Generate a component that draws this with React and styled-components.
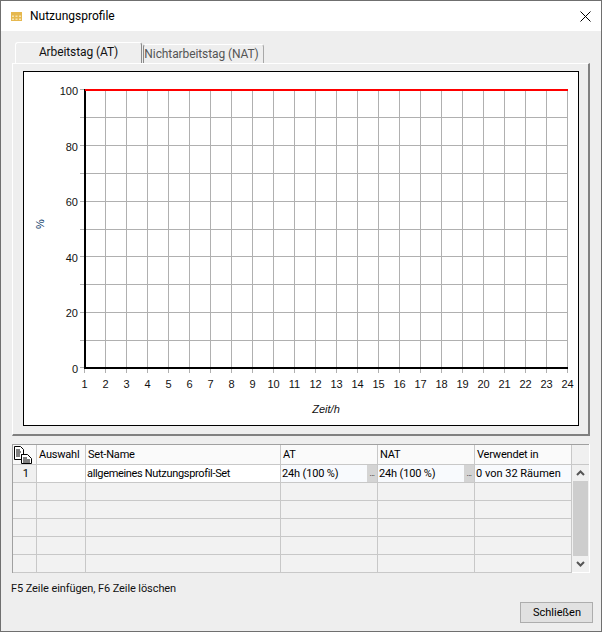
import React from "react";
import styled, { createGlobalStyle } from "styled-components";

const Global = createGlobalStyle`
  html, body { margin: 0; padding: 0; background: #eeeeee; }
  * { box-sizing: border-box; }
`;

const Win = styled.div`
  width: 602px; height: 632px; display: flex; flex-direction: column;
  background: #eeeeee; border: 1px solid #6f6f6f;
  font-family: Roboto, "Liberation Sans", sans-serif; font-size: 11px; color: #000; overflow: hidden;
`;
const TitleBar = styled.div`
  height: 30px; flex: none; background: #fff; display: flex; align-items: center; padding: 0 10px 0 10px; gap: 8px;
`;
const Title = styled.div`
  font-family: Roboto, sans-serif; font-size: 12px; color: #000; flex: 1; line-height: 30px;
`;
const Close = styled.svg` width: 11px; height: 11px; display: block; `;
const TabsRow = styled.div`
  height: 32px; flex: none; padding: 11px 0 0 14px; display: flex; align-items: flex-end; gap: 1px;
`;
const Tab = styled.div`
  height: ${p => (p.$active ? 21 : 19)}px; width: ${p => p.$w}px;
  background: #eeeeee;
  border: 1px solid ${p => (p.$active ? "#fff" : "#a8a8a8")};
  border-bottom: none;
  ${p => p.$active ? "border-right-color:#8a8a8a;" : "border-top-color:#fff; border-left-color:#8a8a8a; padding-right: 4px;"}
  border-radius: 3px 3px 0 0;
  font-family: Roboto, sans-serif; font-size: 12px; letter-spacing: -0.1px; text-align: center;
  color: ${p => (p.$active ? "#111" : "#555")};
  line-height: ${p => (p.$active ? 18 : 19)}px;
  white-space: nowrap;
`;
const Panel = styled.div`
  margin-left: 11px; width: 578px; height: 373px; flex: none;
  border: 1px solid #fff; border-right: 2px solid #808080; border-bottom: 2px solid #808080;
  padding: 7px 10px 0 10px;
`;
const ChartBox = styled.div`
  width: 556px; height: 355px; background: #fff; border: 1px solid #000;
`;
const ChartSvg = styled.svg` display: block; width: 554px; height: 353px; `;
const GridWrap = styled.div`
  margin: 8px 0 0 11px; width: 578px; height: 129px; flex: none; display: flex; background: #f2f2f2;
`;
const Table = styled.div`
  width: 560px; display: grid; grid-template-columns: 24px 49px 195px 97px 97px 97px;
  grid-template-rows: 20px repeat(6, 18px); flex: none;
  border-top: 1px solid #a0a0a0; border-left: 1px solid #a0a0a0;
`;
const Cell = styled.div`
  border-right: 1px solid #c8c8c8; border-bottom: 1px solid #c8c8c8;
  background: ${p => p.$bg || "#f2f2f2"};
  padding-left: 1px;
  font-size: 11px; white-space: nowrap; overflow: hidden;
  letter-spacing: ${p => p.$track || 0}px;
  display: flex; align-items: center; justify-content: space-between;
`;
const HeadCell = styled(Cell)`
  background: #fafafa; padding-left: 2px; letter-spacing: -0.2px;
`;
const CornerCell = styled(Cell)`
  background: #fafafa; padding: 0; align-items: flex-start;
`;
const RowNo = styled(Cell)`
  justify-content: flex-end; padding-right: 7px; background: #f0f0f0;
`;
const Dots = styled.span`
  width: 10px; height: 17px; background: #d4d4d4; color: #222; font-family: "Liberation Sans", sans-serif;
  font-size: 8px; letter-spacing: -0.6px; line-height: 17px; text-align: center; flex: none;
`;
const Scroll = styled.div`
  width: 18px; flex: none; display: flex; flex-direction: column; background: #f0f0f0;
  border-right: 1px solid #fff; border-bottom: 1px solid #fff;
`;
const ScrollCorner = styled.div`
  height: 21px; border-top: 1px solid #a0a0a0; border-bottom: 1px solid #c8c8c8; flex: none;
`;
const ScrollBtn = styled.div`
  height: ${p => p.$h}px; flex: none; display: flex; align-items: center; justify-content: center;
`;
const Thumb = styled.div`
  flex: 1; background: #cdcdcd; margin: 0 1px;
`;
const Hint = styled.div`
  margin: 9px 0 0 10px; height: 14px; font-size: 11px; letter-spacing: -0.09px; line-height: 14px; color: #111;
`;
const Footer = styled.div`
  display: flex; justify-content: flex-end; padding-right: 8px; margin-top: 6px;
`;
const Btn = styled.button`
  width: 73px; height: 21px; background: #e1e1e1; border: 1px solid #adadad; padding: 0 0 0 1px;
  font-family: Roboto, sans-serif; font-size: 11px; color: #000; line-height: 17px;
`;

const PX = i => 60 + i * 21;
const PY = v => 18 + (100 - v) * 2.78;
const FONT = "Liberation Sans";

function Chart() {
  const hours = Array.from({ length: 24 }, (_, i) => i);
  const lines = [90, 80, 70, 60, 50, 40, 30, 20, 10];
  const labels = [100, 80, 60, 40, 20, 0];
  return (
    <ChartSvg viewBox="0 0 554 353">
      {hours.map(i => (
        <line key={i} x1={PX(i) + 0.5} x2={PX(i) + 0.5} y1={18} y2={301} stroke="#b0b0b0" />
      ))}
      {lines.map(v => (
        <line key={v} x1={56} x2={PX(23) + 1} y1={Math.floor(PY(v)) + 0.5} y2={Math.floor(PY(v)) + 0.5} stroke="#b0b0b0" />
      ))}
      <rect x={56} y={17} width={5} height={1} fill="#b0b0b0" />
      <rect x={56} y={295} width={5} height={1} fill="#b0b0b0" />
      <rect x={60} y={17} width={2} height={280} fill="#000" />
      <rect x={60} y={295} width={484} height={2} fill="#000" />
      <rect x={61} y={17} width={483} height={2} fill="#f00" />
      {labels.map(v => (
        <text key={v} x={54} y={PY(v) + 5} textAnchor="end" fontFamily={FONT} fontSize="11" fill="#111">{v}</text>
      ))}
      {hours.map(i => (
        <text key={i} x={PX(i) + 0.5} y={316} textAnchor="middle" fontFamily={FONT} fontSize="11" fill="#111">{i + 1}</text>
      ))}
      <text x={302} y={341} textAnchor="middle" fontFamily={FONT} fontStyle="italic" fontSize="11" fill="#111">Zeit/h</text>
      <text transform="translate(20,152) rotate(-90)" textAnchor="middle" fontFamily={FONT} fontSize="11" fill="#00305f">%</text>
    </ChartSvg>
  );
}

const rows = [0, 1, 2, 3, 4];

export default function App() {
  return (
    <Win>
      <Global />
      <TitleBar>
        <svg width="11" height="9" viewBox="0 0 11 9">
          <rect width="11" height="9" fill="#e6b84f" />
          <path d="M1 3.5h2v1.5H1zM4.5 3.5h2v1.5h-2zM8 3.5h2v1.5H8zM1 6.5h2V8H1zM4.5 6.5h2V8h-2zM8 6.5h2V8H8z" fill="#f6e3b0" />
        </svg>
        <Title>Nutzungsprofile</Title>
        <Close viewBox="0 0 11 11"><path d="M.5.5l10 10M10.5.5l-10 10" stroke="#000" strokeWidth="1" fill="none" /></Close>
      </TitleBar>
      <TabsRow>
        <Tab $active $w={127}>Arbeitstag (AT)</Tab>
        <Tab $w={121}>Nichtarbeitstag (NAT)</Tab>
      </TabsRow>
      <Panel>
        <ChartBox><Chart /></ChartBox>
      </Panel>
      <GridWrap>
        <Table>
          <CornerCell>
            <svg width="23" height="19" viewBox="0 0 23 19">
              <path d="M1.5 1.5h6l3 3v5h-2v5h-7z" fill="#fff" stroke="#000" />
              <path d="M3 5h4M3 7h5M3 9h4M3 11h4" stroke="#000" />
              <path d="M8.5 9.5h6l4 4v5h-10z" fill="#fff" stroke="#000" strokeWidth="1" />
              <path d="M10 13h4M10 15h7M10 17h7" stroke="#000" />
            </svg>
          </CornerCell>
          <HeadCell>Auswahl</HeadCell>
          <HeadCell>Set-Name</HeadCell>
          <HeadCell>AT</HeadCell>
          <HeadCell>NAT</HeadCell>
          <HeadCell>Verwendet in</HeadCell>

          <RowNo>1</RowNo>
          <Cell $bg="#fff" />
          <Cell $bg="#fff" $track={-0.33}>allgemeines Nutzungsprofil-Set</Cell>
          <Cell $bg="#f8fafd" $track={-0.15}>24h (100 %)<Dots>...</Dots></Cell>
          <Cell $bg="#f8fafd" $track={-0.15}>24h (100 %)<Dots>...</Dots></Cell>
          <Cell $bg="#f8fafd">0 von 32 Räumen</Cell>

          {rows.map(r => (
            <React.Fragment key={r}>
              <Cell /><Cell /><Cell /><Cell /><Cell /><Cell />
            </React.Fragment>
          ))}
        </Table>
        <Scroll>
          <ScrollCorner />
          <ScrollBtn $h={16}>
            <svg width="9" height="6" viewBox="0 0 9 6"><path d="M1 5l3.5-3.5L8 5" fill="none" stroke="#555" strokeWidth="2" /></svg>
          </ScrollBtn>
          <Thumb />
          <ScrollBtn $h={16}>
            <svg width="9" height="6" viewBox="0 0 9 6"><path d="M1 1l3.5 3.5L8 1" fill="none" stroke="#555" strokeWidth="2" /></svg>
          </ScrollBtn>
        </Scroll>
      </GridWrap>
      <Hint>F5 Zeile einfügen, F6 Zeile löschen</Hint>
      <Footer><Btn>Schließen</Btn></Footer>
    </Win>
  );
}
